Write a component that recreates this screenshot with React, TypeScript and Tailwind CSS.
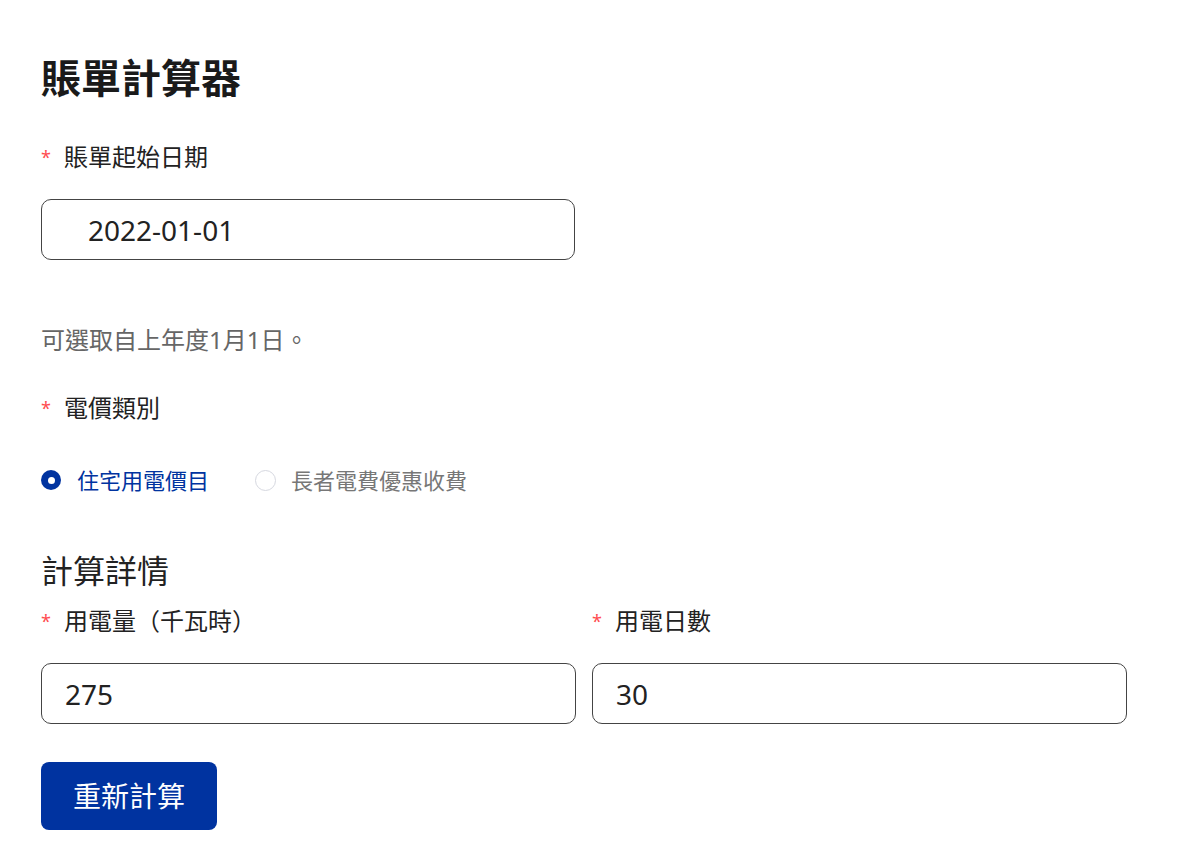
import React from "react";

const FONT = { fontFamily: '"Noto Sans", "Noto Sans CJK TC", sans-serif' };

function Label({ text }: { text: string }) {
  return (
    <div className="flex items-center text-[24px] leading-[32px] text-[#222]">
      <span className="w-[23px] text-[18px] text-[#ff4d4f]">*</span>
      <span>{text}</span>
    </div>
  );
}

export default function App() {
  return (
    <div className="min-h-[859px] bg-white" style={FONT}>
      <div className="ml-[41px] flex w-[1086px] flex-col pt-[54px]">
        <h1 className="text-[40px] font-bold leading-[48px] text-[#1a1a1a]">賬單計算器</h1>

        <div className="mt-[39px]">
          <Label text="賬單起始日期" />
        </div>
        <div className="mt-[26px] flex h-[61px] w-[534px] items-center rounded-[10px] border-[1.5px] border-[#444] pl-[46px] text-[28px] text-[#222]">
          2022-01-01
        </div>

        <p className="mt-[64px] text-[24px] leading-[32px] text-[#666]">可選取自上年度1月1日。</p>

        <div className="mt-[36px]">
          <Label text="電價類別" />
        </div>

        <div className="mt-[40px] flex h-[32px] items-center text-[22px]">
          <div className="flex items-center">
            <span className="flex h-[20px] w-[20px] items-center justify-center rounded-full bg-[#0033a0]">
              <span className="h-[7px] w-[7px] rounded-full bg-white" />
            </span>
            <span className="ml-[16px] text-[#0033a0]">住宅用電價目</span>
          </div>
          <div className="ml-[46px] flex items-center">
            <span className="h-[21px] w-[21px] rounded-full border border-[#d6d8e0] bg-white" />
            <span className="ml-[15px] text-[#777]">長者電費優惠收費</span>
          </div>
        </div>

        <h2 className="mt-[55px] text-[32px] leading-[40px] text-[#222]">計算詳情</h2>

        <div className="mt-[14px] grid grid-cols-2 gap-x-[16px]">
          <Label text="用電量（千瓦時）" />
          <Label text="用電日數" />
          <div className="mt-[26px] flex h-[61px] items-center rounded-[10px] border-[1.5px] border-[#444] pl-[23px] text-[28px] text-[#222]">
            275
          </div>
          <div className="mt-[26px] flex h-[61px] items-center rounded-[10px] border-[1.5px] border-[#444] pl-[23px] text-[28px] text-[#222]">
            30
          </div>
        </div>

        <div className="mt-[38px]">
          <button className="flex h-[68px] w-[176px] items-center justify-center rounded-[8px] bg-[#0033a0] text-[28px] text-white">
            重新計算
          </button>
        </div>
      </div>
    </div>
  );
}
